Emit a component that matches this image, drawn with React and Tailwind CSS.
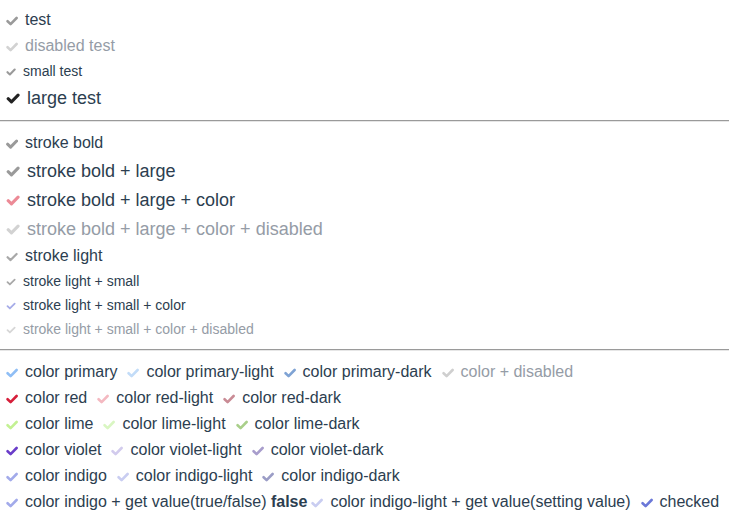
const TEXT = "text-[#2c3e50]";
const DIS = "text-[#959ca6]";

const Check = ({ size = 12, color = "#9a9a9a", sw = 2.6 }) => (
    <svg width={size} height={Math.round(size * 0.8)} viewBox="0 0 12 10" className="shrink-0 mt-[2px]">
        <path
            d="M1.6 5.2 L4.6 8.1 L10.6 2"
            fill="none"
            stroke={color}
            strokeWidth={sw}
            strokeLinecap="round"
            strokeLinejoin="round"
        />
    </svg>
);

const Item = ({ children, size = "md", color, sw, disabled = false, className = "pl-[6px]" }) => {
    const iconSize = size === "sm" ? 10 : size === "lg" ? 14 : 12;
    return (
        <span className={`inline-flex items-center mr-[4px] gap-[7px] ${className}`}>
            <Check size={iconSize} color={color} sw={sw} />
            <span className={disabled ? DIS : TEXT}>{children}</span>
        </span>
    );
};

const Rule = ({ className = "" }) => (
    <div className={`border-t border-t-[#9a9a9a] border-b border-b-[#e6e6e6] ${className}`} />
);

const colorRows = [
    [
        { label: "color primary", color: "#8fbef5" },
        { label: "color primary-light", color: "#c2dcf8" },
        { label: "color primary-dark", color: "#7fa3d4" },
        { label: "color + disabled", color: "#cfcfcf", disabled: true },
    ],
    [
        { label: "color red", color: "#d61f3a" },
        { label: "color red-light", color: "#f4b9c1" },
        { label: "color red-dark", color: "#c98b95" },
    ],
    [
        { label: "color lime", color: "#c3f193" },
        { label: "color lime-light", color: "#d9f6c2" },
        { label: "color lime-dark", color: "#a9cf8a" },
    ],
    [
        { label: "color violet", color: "#6a3dc9" },
        { label: "color violet-light", color: "#d2cbed" },
        { label: "color violet-dark", color: "#a89dcc" },
    ],
    [
        { label: "color indigo", color: "#a2aaea" },
        { label: "color indigo-light", color: "#c9cdf1" },
        { label: "color indigo-dark", color: "#9b9dc6" },
    ],
];

export default function App() {
    return (
        <div className="w-[729px] h-[524px] bg-white text-[16px] leading-none font-['Liberation_Sans',Arial,sans-serif] overflow-hidden">
            {/* basic */}
            <div className="pt-[6px] flex flex-col">
                <div className="h-[26px] pt-[2px] flex items-center"><Item color="#9a9a9a">test</Item></div>
                <div className="h-[26px] pt-[2px] flex items-center"><Item color="#d2d2d2" disabled>disabled test</Item></div>
                <div className="h-[24px] pt-[2px] flex items-center text-[14px]"><Item size="sm" color="#9a9a9a">small test</Item></div>
                <div className="h-[29px] pt-[2px] flex items-center text-[18px]"><Item size="lg" color="#222222" sw={2.8}>large test</Item></div>
            </div>

            <Rule className="mt-[9px]" />

            {/* stroke */}
            <div className="pt-[7px] flex flex-col">
                <div className="h-[26px] pt-[2px] flex items-center"><Item color="#9a9a9a" sw={3}>stroke bold</Item></div>
                <div className="h-[29px] pt-[2px] flex items-center text-[18px]"><Item size="lg" color="#9a9a9a" sw={2.8}>stroke bold + large</Item></div>
                <div className="h-[29px] pt-[2px] flex items-center text-[18px]"><Item size="lg" color="#ec8a96" sw={2.8}>stroke bold + large + color</Item></div>
                <div className="h-[29px] pt-[2px] flex items-center text-[18px]"><Item size="lg" color="#d2d2d2" sw={2.8} disabled>stroke bold + large + color + disabled</Item></div>
                <div className="h-[26px] pt-[2px] flex items-center"><Item color="#a8a8a8" sw={2.2}>stroke light</Item></div>
                <div className="h-[24px] pt-[2px] flex items-center text-[14px]"><Item size="sm" color="#a8a8a8" sw={2.2}>stroke light + small</Item></div>
                <div className="h-[24px] pt-[2px] flex items-center text-[14px]"><Item size="sm" color="#a6ace8" sw={2.2}>stroke light + small + color</Item></div>
                <div className="h-[24px] pt-[2px] flex items-center text-[14px]"><Item size="sm" color="#d6d6d6" sw={2.2} disabled>stroke light + small + color + disabled</Item></div>
            </div>

            <Rule className="mt-[9px]" />

            {/* colors */}
            <div className="pt-[7px] flex flex-col">
                {colorRows.map((row, i) => (
                    <div key={i} className="h-[26px] pt-[2px] flex items-center">
                        {row.map((it) => (
                            <Item key={it.label} color={it.color} disabled={it.disabled}>{it.label}</Item>
                        ))}
                    </div>
                ))}
                <div className="h-[26px] pt-[2px] flex items-center whitespace-nowrap">
                    <Item color="#a2aaea">
                        color indigo + get value(true/false) <b className="font-bold">false</b>
                    </Item>
                    <Item color="#c9cdf1" className="pl-0">color indigo-light + get value(setting value)</Item>
                    <Item color="#6b78d8">checked</Item>
                </div>
            </div>
        </div>
    );
}
